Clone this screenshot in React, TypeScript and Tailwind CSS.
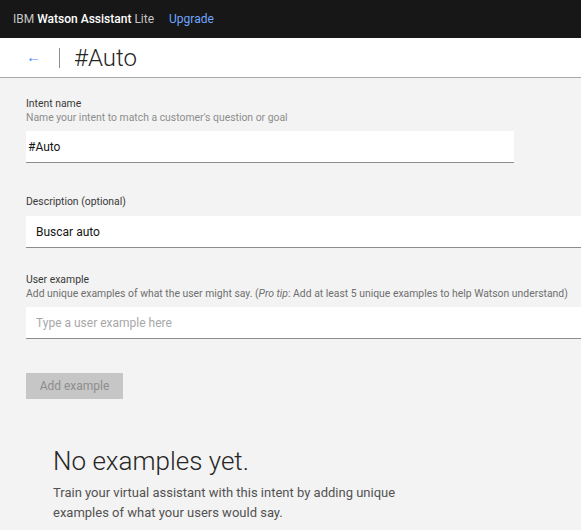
export default function App() {
  return (
    <div className="flex min-h-screen flex-col overflow-hidden bg-[#f3f3f3] font-['Roboto',sans-serif] text-[#161616]">
      {/* top bar */}
      <header className="flex h-[38px] items-center bg-[#171717] pl-[13px] text-[12px]">
        <span className="text-[#c6c6c6]">IBM</span>
        <span className="ml-[3px] font-medium text-white">Watson Assistant</span>
        <span className="ml-[3px] text-[#c6c6c6]">Lite</span>
        <a className="ml-[15px] text-[#6ea6ff]">Upgrade</a>
      </header>

      {/* title row */}
      <div className="flex h-[40px] items-center border-b border-[#a8a8a8] bg-white">
        <span className="ml-[26px] text-[15px] leading-none text-[#4589ff]">←</span>
        <span className="ml-[18px] h-[20px] w-px bg-[#8d8d8d]" />
        <h1 className="ml-[14px] text-[24px] font-light leading-none text-[#262626]">#Auto</h1>
      </div>

      <main className="flex flex-col px-[26px] pt-[19px]">
        <label className="text-[10.4px] leading-[14px] text-[#393939]">Intent name</label>
        <p className="text-[10.4px] leading-[14px] text-[#8d8d8d]">
          Name your intent to match a customer's question or goal
        </p>
        <div className="mt-[6px] flex h-[32px] w-[488px] items-center border-b border-[#8d8d8d] bg-white pl-[2px] text-[12px]">
          #Auto
        </div>

        <label className="mt-[32px] text-[10.4px] leading-[14px] text-[#393939]">Description (optional)</label>
        <div className="mt-[7px] -mr-[60px] flex h-[32px] items-center border-b border-[#8d8d8d] bg-white pl-[10px] text-[12px]">
          Buscar auto
        </div>

        <label className="mt-[25px] text-[10.4px] leading-[14px] text-[#393939]">User example</label>
        <p className="whitespace-nowrap text-[10.4px] leading-[14px] text-[#6f6f6f]">
          Add unique examples of what the user might say. (<i>Pro tip</i>: Add at least 5 unique examples to help
          Watson understand)
        </p>
        <div className="mt-[6px] -mr-[60px] flex h-[32px] items-center border-b border-[#8d8d8d] bg-white pl-[10px] text-[12px] text-[#a8a8a8]">
          Type a user example here
        </div>

        <button className="mt-[34px] h-[26px] w-[97px] bg-[#c6c6c6] text-[12px] text-[#8d8d8d]">
          Add example
        </button>

        <div className="mt-[46px] pl-[27px]">
          <h2 className="text-[26px] font-light leading-[32px] text-[#262626]">No examples yet.</h2>
          <p className="mt-[6px] w-[360px] text-[13px] leading-[20px] text-[#525252]">
            Train your virtual assistant with this intent by adding unique examples of what your users would say.
          </p>
        </div>
      </main>
    </div>
  );
}
